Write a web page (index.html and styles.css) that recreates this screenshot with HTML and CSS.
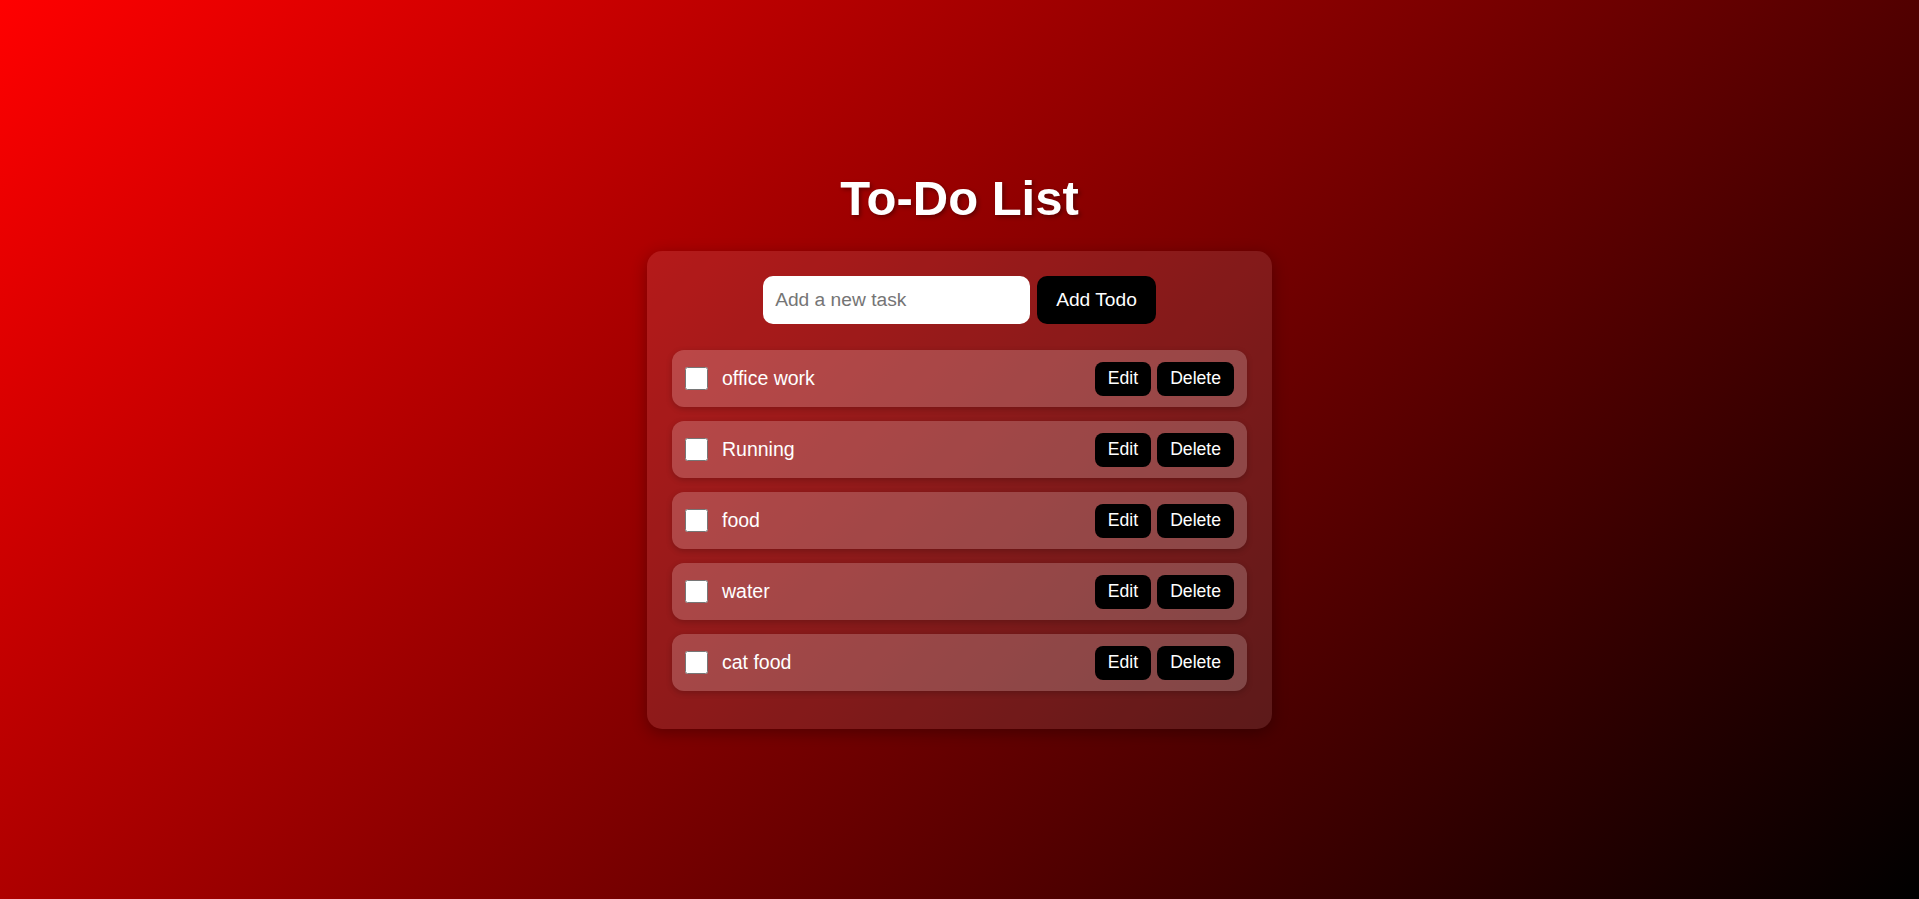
FILE: index.html
```html
<!DOCTYPE html>
<html lang="en">
<head>
<meta charset="UTF-8">
<title>To-Do List</title>
<link rel="stylesheet" href="styles.css">
</head>
<body>
  <main class="app">
    <h1 class="title">To-Do List</h1>
    <section class="card">
      <form class="add-form">
        <input class="task-input" type="text" placeholder="Add a new task">
        <button class="add-btn" type="button">Add Todo</button>
      </form>
      <ul class="todo-list">
        <li class="todo-item">
          <input class="todo-check" type="checkbox">
          <span class="todo-text">office work</span>
          <div class="todo-actions"><button class="small-btn" type="button">Edit</button><button class="small-btn" type="button">Delete</button></div>
        </li>
        <li class="todo-item">
          <input class="todo-check" type="checkbox">
          <span class="todo-text">Running</span>
          <div class="todo-actions"><button class="small-btn" type="button">Edit</button><button class="small-btn" type="button">Delete</button></div>
        </li>
        <li class="todo-item">
          <input class="todo-check" type="checkbox">
          <span class="todo-text">food</span>
          <div class="todo-actions"><button class="small-btn" type="button">Edit</button><button class="small-btn" type="button">Delete</button></div>
        </li>
        <li class="todo-item">
          <input class="todo-check" type="checkbox">
          <span class="todo-text">water</span>
          <div class="todo-actions"><button class="small-btn" type="button">Edit</button><button class="small-btn" type="button">Delete</button></div>
        </li>
        <li class="todo-item">
          <input class="todo-check" type="checkbox">
          <span class="todo-text">cat food</span>
          <div class="todo-actions"><button class="small-btn" type="button">Edit</button><button class="small-btn" type="button">Delete</button></div>
        </li>
      </ul>
    </section>
  </main>
</body>
</html>
```
FILE: styles.css
```css
* { box-sizing: border-box; }

html, body {
  margin: 0;
  padding: 0;
  height: 100%;
}

body {
  font-family: "Liberation Sans", Arial, sans-serif;
  background: linear-gradient(135deg, #ff0000 0%, #000000 100%);
  color: #fff;
  min-height: 100vh;
  display: flex;
  align-items: center;
  justify-content: center;
}

.app {
  display: flex;
  flex-direction: column;
  align-items: center;
}

.title {
  margin: 0 0 25px;
  font-size: 49px;
  line-height: 56px;
  font-weight: 700;
  color: #fff;
  text-shadow: 2px 2px 4px rgba(0, 0, 0, 0.35);
}

.card {
  width: 625px;
  padding: 25px 25px 24px;
  background: rgba(255, 255, 255, 0.1);
  border-radius: 15px;
  box-shadow: 0 4px 16px rgba(0, 0, 0, 0.3);
}

.add-form {
  display: flex;
  justify-content: center;
  gap: 7px;
  margin: 0 0 26px;
}

.task-input {
  width: 267px;
  height: 48px;
  padding: 0 12px;
  border: none;
  border-radius: 10px;
  background: #fff;
  font-family: inherit;
  font-size: 19.2px;
  color: #222;
  outline: none;
}

.task-input::placeholder { color: #757575; }

.add-btn {
  height: 48px;
  padding: 0 19px;
  border: none;
  border-radius: 10px;
  background: #000;
  color: #fff;
  font-family: inherit;
  font-size: 19.2px;
}

.todo-list {
  list-style: none;
  margin: 0;
  padding: 0;
}

.todo-item {
  display: flex;
  align-items: center;
  height: 57px;
  margin: 0 0 14px;
  padding: 0 13px;
  background: rgba(255, 255, 255, 0.2);
  border-radius: 12px;
  box-shadow: 0 2px 6px rgba(0, 0, 0, 0.2);
}

.todo-check {
  width: 23px;
  height: 23px;
  margin: 0 14px 0 0;
  flex: none;
}

.todo-text {
  flex: 1;
  font-size: 19.5px;
  color: #fff;
}

.todo-actions {
  display: flex;
  gap: 6px;
}

.small-btn {
  height: 34px;
  padding: 0 13px;
  border: none;
  border-radius: 8px;
  background: #000;
  color: #fff;
  font-family: inherit;
  font-size: 17.6px;
}
```
